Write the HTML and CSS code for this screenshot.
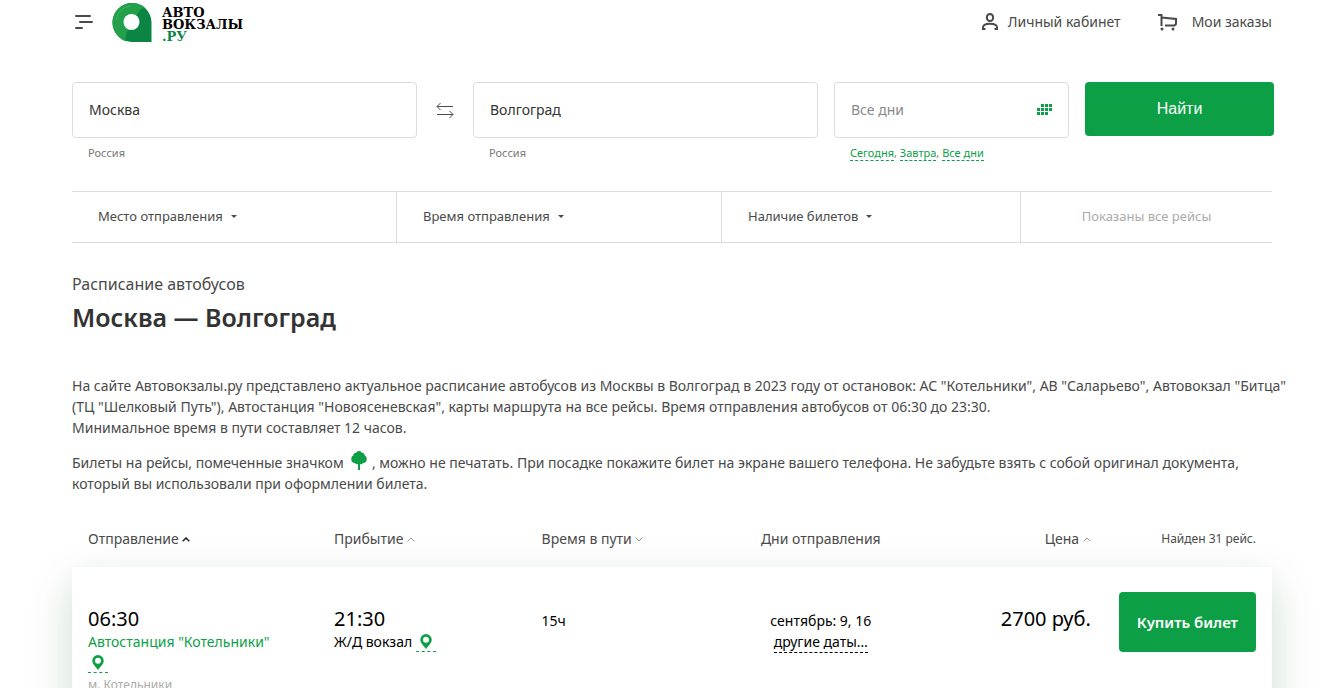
FILE: index.html
```html
<!DOCTYPE html>
<html lang="ru">
<head>
<meta charset="utf-8">
<title>Москва — Волгоград: расписание автобусов</title>
<link rel="stylesheet" href="styles.css">
</head>
<body>
<div class="page">
  <header class="header">
    <button class="menu" type="button" aria-label="Меню">
      <svg width="18" height="14" viewBox="0 0 18 14" stroke="#4a4a4a" stroke-width="2" stroke-linecap="round"><path d="M1 1h14M5 7h12M1 13h6"/></svg>
    </button>
    <a class="logo" href="#" aria-label="Автовокзалы.ру">
      <svg width="40" height="40" viewBox="0 0 40 40">
        <path d="M20 1A19.500 19.500 0 0 0 20 40H39.500V20A19.500 19.500 0 0 0 20 1z" fill="#0b8543"/>
        <path d="M20 1A19.500 19.500 0 0 0 7 35Q11 39 14 39Q12 33 17 27L25 13Q28 6 33 5.500A19 19 0 0 0 20 1z" fill="#22a04a"/>
        <path d="M4 18Q6 6 18 4" fill="none" stroke="#45b25c" stroke-width="1"/>
        <circle cx="19.500" cy="20" r="8" fill="#fff"/>
      </svg>
      <span class="logo-text">АВТО<br>ВОКЗАЛЫ<br><span class="logo-zone">.РУ</span></span>
    </a>
    <nav class="user-nav">
      <a class="nav-link" href="#">
        <svg width="16" height="18" viewBox="0 0 16 18" fill="none" stroke="#4a4a4a" stroke-width="2"><ellipse cx="8" cy="4.500" rx="3.200" ry="3.500"/><path d="M3.500 16H1v-1.500C1 12 4 10.700 8 10.700s7 1.300 7 3.800V16h-2.500"/></svg>
        Личный кабинет
      </a>
      <a class="nav-link nav-cart" href="#">
        <svg width="20" height="18" viewBox="0 0 20 18" fill="none" stroke="#4a4a4a" stroke-width="2"><path d="M0 2h3.500v11M3.500 4.500L18 6v5l-1.500 1.500H7"/><circle cx="4" cy="16" r="1.500" fill="#4a4a4a" stroke="none"/><circle cx="15" cy="16" r="1.500" fill="#4a4a4a" stroke="none"/></svg>
        Мои заказы
      </a>
    </nav>
  </header>

  <form class="search">
    <div class="field">
      <input class="input" id="from" type="text" value="Москва" aria-label="Откуда">
      <label class="hint" for="from">Россия</label>
    </div>
    <button class="swap" type="button" aria-label="Поменять местами">
      <svg width="18" height="18" viewBox="0 0 18 18" fill="none" stroke="#4a4a4a"><path d="M1 5.500h16M4.500 2L1 5.500 4.500 9M1 13.500h16M13.500 10l3.500 3.500-3.500 3.500"/></svg>
    </button>
    <div class="field">
      <input class="input" id="to" type="text" value="Волгоград" aria-label="Куда">
      <label class="hint" for="to">Россия</label>
    </div>
    <div class="field field-date">
      <div class="date-box">
        <input class="input" type="text" placeholder="Все дни" aria-label="Дата">
        <svg class="calendar" width="15" height="11" viewBox="0 0 15 11" fill="#0c9f46"><path d="M4 0h3v3H4zM8 0h3v3H8zM12 0h3v3h-3zM0 4h3v3H0zM4 4h3v3H4zM8 4h3v3H8zM12 4h3v3h-3zM0 8h3v3H0zM4 8h3v3H4zM8 8h3v3H8z"/></svg>
      </div>
      <div class="hint"><a class="day" href="#">Сегодня</a>, <a class="day" href="#">Завтра</a>, <a class="day" href="#">Все дни</a></div>
    </div>
    <button class="find" type="submit">Найти</button>
  </form>

  <div class="filters">
    <button class="filter" type="button">Место отправления <span class="caret"></span></button>
    <button class="filter" type="button">Время отправления <span class="caret"></span></button>
    <button class="filter" type="button">Наличие билетов <span class="caret"></span></button>
    <div class="filter-status">Показаны все рейсы</div>
  </div>

  <main>
    <p class="kicker">Расписание автобусов</p>
    <h1 class="title">Москва — Волгоград</h1>
    <p class="text">На сайте Автовокзалы.ру представлено актуальное расписание автобусов из Москвы в Волгоград в 2023 году от остановок: АС "Котельники", АВ "Саларьево", Автовокзал "Битца"<br>(ТЦ "Шелковый Путь"), Автостанция "Новоясеневская", карты маршрута на все рейсы. Время отправления автобусов от 06:30 до 23:30.<br>Минимальное время в пути составляет 12 часов.</p>
    <p class="text text-tickets">Билеты на рейсы, помеченные значком <svg class="tree" width="16" height="19" viewBox="0 0 16 19" fill="#0c9f46"><path d="M8 0c1.500 0 2.300.8 2.800 1.700 1.800-.1 2.900 1 2.900 2.700C15 5 16 6.400 15.700 8c.2 2.500-1.700 4-3.500 4-1 1.200-2 1.500-3.200 1.300V19H7v-5.700c-1.300.2-2.400-.3-3.200-1.300C1.700 12 .1 10.500.3 8 0 6.400 1 5 2.300 4.400c0-1.700 1.100-2.800 2.900-2.700C5.700.8 6.500 0 8 0z"/></svg> , можно не печатать. При посадке покажите билет на экране вашего телефона. Не забудьте взять с собой оригинал документа,<br>который вы использовали при оформлении билета.</p>

    <table class="trips">
      <colgroup><col class="c-from"><col class="c-to"><col class="c-time"><col class="c-days"><col class="c-price"><col class="c-buy"></colgroup>
      <thead>
        <tr>
          <th>Отправление <svg class="sort sort-on" width="8" height="5" viewBox="0 0 8 5"><path d="M.7 4.300L4 1l3.300 3.300"/></svg></th>
          <th>Прибытие <svg class="sort" width="8" height="5" viewBox="0 0 8 5"><path d="M.7 4.300L4 1l3.300 3.300"/></svg></th>
          <th>Время в пути <svg class="sort" width="8" height="5" viewBox="0 0 8 5"><path d="M.7.7L4 4 7.300.7"/></svg></th>
          <th class="center">Дни отправления</th>
          <th class="right price">Цена <svg class="sort" width="8" height="5" viewBox="0 0 8 5"><path d="M.7 4.300L4 1l3.300 3.300"/></svg></th>
          <th class="right count">Найден 31 рейс.</th>
        </tr>
      </thead>
      <tbody>
        <tr class="trip">
          <td>
            <div class="clock">06:30</div>
            <a class="station" href="#">Автостанция "Котельники"</a><br>
            <a class="pin" href="#" aria-label="На карте"><svg width="12" height="15" viewBox="0 0 12 15"><path fill="#0c9f46" fill-rule="evenodd" d="M6 0a5.700 5.700 0 0 1 5.700 5.700C11.700 9 8.500 11.500 6 15 3.500 11.500.3 9 .3 5.700A5.700 5.700 0 0 1 6 0zm0 2.800a3 3 0 1 0 0 6 3 3 0 0 0 0-6z"/></svg></a>
            <div class="metro">м. Котельники</div>
          </td>
          <td>
            <div class="clock">21:30</div>
            Ж/Д вокзал <a class="pin" href="#" aria-label="На карте"><svg width="12" height="15" viewBox="0 0 12 15"><path fill="#0c9f46" fill-rule="evenodd" d="M6 0a5.700 5.700 0 0 1 5.700 5.700C11.700 9 8.500 11.500 6 15 3.500 11.500.3 9 .3 5.700A5.700 5.700 0 0 1 6 0zm0 2.800a3 3 0 1 0 0 6 3 3 0 0 0 0-6z"/></svg></a>
          </td>
          <td class="duration">15ч</td>
          <td class="center duration">сентябрь: 9, 16<br><a class="dates" href="#">другие даты…</a></td>
          <td class="right price"><div class="clock">2700 руб.</div></td>
          <td class="right buy-cell"><button class="buy" type="button">Купить билет</button></td>
        </tr>
      </tbody>
    </table>
  </main>
</div>
</body>
</html>
```
FILE: styles.css
```css
* { box-sizing: border-box; }

body {
  margin: 0;
  background: #fff;
  color: #4a4a4a;
  font: 14px/21px "Noto Sans", "Open Sans", sans-serif;
}

.page {
  height: 100vh;
  overflow-y: auto;
  scrollbar-width: none;
  padding: 0 70px 0 72px;
}

a { color: inherit; text-decoration: none; }
button { font: inherit; color: inherit; border: 0; background: none; padding: 0; cursor: pointer; }
svg { flex: none; }

/* Header */
.header { display: flex; align-items: center; height: 43px; }
.menu { display: flex; margin: 0 19px 0 3px; }
.logo { display: flex; align-items: center; gap: 10px; }
.logo-text {
  padding-top: 7px;
  color: #000;
  font: bold 13px/12px "DejaVu Serif", serif;
}
.logo-zone { color: #0b8543; }
.user-nav { display: flex; gap: 37px; margin-left: auto; }
.nav-link { display: flex; align-items: center; gap: 10px; }
.nav-cart { gap: 14px; }

/* Search form */
.search { display: flex; align-items: flex-start; margin: 39px -2px 0 0; }
.field { flex: 345; min-width: 0; }
.field-date { flex: 235; margin: 0 16px; }
.input {
  display: block;
  width: 100%;
  height: 56px;
  padding: 0 16px 2px;
  border: 1px solid #dcdcdc;
  border-radius: 4px;
  background: #fff;
  color: #333;
  font: inherit;
}
.input::placeholder { color: #8a8a8a; opacity: 1; }
.hint { display: block; padding: 7px 16px 0; color: #777; font-size: 11px; line-height: 16px; }
.day { color: #0c9f46; border-bottom: 1px dashed #0c9f46; }
.date-box { position: relative; }
.calendar { position: absolute; right: 17px; top: 22px; }
.swap { display: flex; justify-content: center; align-items: center; width: 56px; height: 56px; }
.find {
  flex: 189;
  height: 54px;
  border-radius: 4px;
  background: #0c9f46;
  color: #fff;
  font: 16px/20px "Liberation Sans", Arial, sans-serif;
}

/* Filters */
.filters {
  display: grid;
  grid-template-columns: 325fr 325fr 299fr 251fr;
  margin-top: 30px;
  border: solid #dcdcdc;
  border-width: 1px 0;
  font-size: 13px;
}
.filter {
  display: flex;
  align-items: center;
  gap: 8px;
  height: 50px;
  padding: 0 0 2px 26px;
  border-right: 1px solid #dcdcdc;
}
.filter-status { color: #aaa; text-align: center; line-height: 48px; }
.caret { border: solid transparent; border-width: 3px 3px 0; border-top-color: #4a4a4a; }

/* Text */
.kicker { margin: 30px 0 0; font-size: 16px; line-height: 22px; }
.title { margin: 7px 0 0; color: #333; font-size: 25px; line-height: 30px; font-weight: 600; }
.text { margin: 43px 0 0; white-space: nowrap; }
.text-tickets { margin-top: 13px; }
.tree { margin: 0 1px 0 4px; vertical-align: -2px; }

/* Trips */
.trips { width: 100%; margin-top: 24px; border-spacing: 0; table-layout: fixed; }
.c-from { width: 20.5%; }
.c-to { width: 17.3%; }
.c-time { width: 17.2%; }
.c-days { width: 14.8%; }
.c-price { width: 16.1%; }
.c-buy { width: 14.1%; }
.trips th { padding: 10px 16px 18px; font-weight: 400; line-height: 21px; text-align: left; white-space: nowrap; vertical-align: bottom; }
.trips .center { text-align: center; }
.trips .right { text-align: right; }
.trips .price { padding-right: 12px; }
.trips .count { font-size: 12px; }
.sort { vertical-align: 2px; fill: none; stroke: #999; }
.sort-on { stroke: #222; stroke-width: 1.5; }
.trip { color: #000; box-shadow: 0 15px 40px rgba(10, 80, 30, 0.2); }
.trip td { height: 168px; padding: 40px 16px 16px; background: #fff; vertical-align: top; white-space: nowrap; }
.trip .clock { font-size: 20px; line-height: 24px; }
.station { color: #0c9f46; }
.pin { display: inline-block; padding: 0 4px 2px; border-bottom: 1px dashed #0c9f46; line-height: 0; vertical-align: middle; }
.metro { color: #aaa; font-size: 12px; line-height: 24px; }
.trip .duration { padding-top: 43px; }
.dates { padding-bottom: 1px; border-bottom: 1px dashed #000; }
.trip .buy-cell { padding-top: 25px; }
.buy {
  width: 100%;
  height: 60px;
  border-radius: 4px;
  background: #0c9f46;
  color: #fff;
  font-size: 15px;
  font-weight: 600;
}
```
